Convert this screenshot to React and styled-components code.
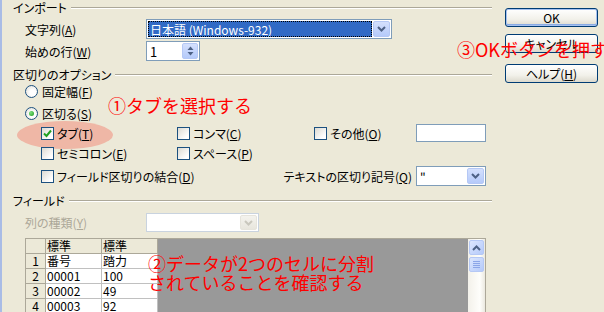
import React from 'react';
import styled, { createGlobalStyle } from 'styled-components';

const GlobalStyle = createGlobalStyle`
  html, body {
    margin: 0;
    padding: 0;
    background: #ece9d8;
  }
  body {
    font-family: "Noto Sans CJK JP", "DejaVu Sans", sans-serif;
    font-size: 12px;
    font-feature-settings: "palt";
    color: #000;
  }
`;

const Window = styled.div`
  position: relative;
  width: 604px;
  height: 312px;
  overflow: hidden;
  display: flex;
  box-sizing: border-box;
  border-left: 2px solid #a9bce6;
  background: #ece9d8;
`;

const Main = styled.div`
  width: 490px;
  box-sizing: border-box;
  padding: 0 6px 0 11px;
  display: flex;
  flex-direction: column;
`;

const Heading = styled.div`
  display: flex;
  align-items: center;
  gap: 4px;
  height: 16px;
  margin-top: ${(p) => p.$top || 0}px;
  margin-right: -6px;
  line-height: 16px;
`;

const Rule = styled.div`
  flex: 1;
  height: 0;
  border-top: 1px solid #aca899;
  border-bottom: 1px solid #fff;
`;

const Row = styled.div`
  display: flex;
  align-items: center;
  height: ${(p) => p.$h}px;
  margin-top: ${(p) => p.$top || 0}px;
  padding-left: ${(p) => p.$indent ?? 12}px;
  position: relative;
  z-index: 1;
`;

const Label = styled.span`
  width: ${(p) => (p.$w ? `${p.$w}px` : 'auto')};
  flex: none;
  white-space: nowrap;
  color: ${(p) => (p.$disabled ? '#aca899' : '#000')};
  margin-left: ${(p) => (p.$push ? 'auto' : '0')};
  margin-right: ${(p) => p.$gap || 0}px;
`;

const U = styled.span`
  text-decoration: underline;
  text-underline-offset: 1px;
`;

const SelectBox = styled.div`
  width: ${(p) => p.$w}px;
  height: ${(p) => p.$h || 20}px;
  box-sizing: border-box;
  border: 1px solid ${(p) => (p.$disabled ? '#c9d3df' : '#7f9db9')};
  background: #fff;
  display: flex;
  align-items: center;
  padding: 1px;
  gap: 1px;
`;

const SelectValue = styled.div`
  flex: 1;
  height: 100%;
  box-sizing: border-box;
  display: flex;
  align-items: center;
  padding-left: 2px;
  white-space: nowrap;
  overflow: hidden;
  ${(p) =>
    p.$selected &&
    `
    background: #316ac5;
    color: #fff;
    outline: 1px dotted #000;
    outline-offset: -1px;
  `}
`;

const DropButton = styled.div`
  width: 17px;
  height: 100%;
  box-sizing: border-box;
  border: 1px solid ${(p) => (p.$disabled ? '#e6e4dc' : '#b5c8f5')};
  border-radius: 2px;
  background: ${(p) =>
    p.$disabled
      ? 'linear-gradient(#f4f3ee, #e8e6dd)'
      : 'linear-gradient(#d4e0fd, #b5cafa)'};
  display: flex;
  align-items: center;
  justify-content: center;
  flex: none;
`;

const SpinBox = styled.div`
  width: 54px;
  height: 20px;
  box-sizing: border-box;
  border: 1px solid #7f9db9;
  background: #fff;
  display: flex;
  align-items: center;
  padding: 1px;
`;

const SpinValue = styled.div`
  flex: 1;
  padding-left: 2px;
  font-size: 13px;
`;

const SpinButton = styled.div`
  width: 16px;
  height: 100%;
  box-sizing: border-box;
  border: 1px solid #b5c8f5;
  border-radius: 2px;
  background: linear-gradient(#d4e0fd, #b5cafa);
  display: flex;
  flex-direction: column;
  align-items: center;
  justify-content: center;
  gap: 2px;
`;

const Radio = styled.span`
  width: 13px;
  height: 13px;
  box-sizing: border-box;
  border-radius: 50%;
  border: 1px solid #1c5180;
  background: radial-gradient(circle at 60% 60%, #fff 30%, #dcdad2 100%);
  display: inline-flex;
  align-items: center;
  justify-content: center;
  margin-right: 4px;
  flex: none;
  &::after {
    content: '';
    display: ${(p) => (p.$on ? 'block' : 'none')};
    width: 5px;
    height: 5px;
    border-radius: 50%;
    background: radial-gradient(circle at 35% 35%, #7ee07e, #1e9b1e);
  }
`;

const Box = styled.span`
  width: 13px;
  height: 13px;
  box-sizing: border-box;
  border: 1px solid #1c5180;
  background: linear-gradient(135deg, #dcdad2, #fff 80%);
  display: inline-flex;
  align-items: center;
  justify-content: center;
  margin-right: 3px;
  flex: none;
`;

const Check = styled.label`
  display: flex;
  align-items: center;
  white-space: nowrap;
`;

const OptionGrid = styled.div`
  display: grid;
  grid-template-columns: 136px 137px 102px 70px;
  align-items: center;
  height: ${(p) => p.$h}px;
  margin-top: ${(p) => p.$top || 0}px;
  padding-left: 28px;
  position: relative;
  z-index: 1;
`;

const TextInput = styled.div`
  width: 70px;
  height: 18px;
  box-sizing: border-box;
  border: 1px solid #7f9db9;
  background: #fff;
`;

const OptionsArea = styled.div`
  position: relative;
`;

const Highlight = styled.div`
  position: absolute;
  left: 4px;
  top: 38px;
  width: 96px;
  height: 28px;
  border-radius: 50%;
  background: #efb7a6;
  z-index: 0;
`;

const GridFrame = styled.div`
  margin-top: 6px;
  margin-left: 12px;
  flex: 1;
  display: flex;
  border-top: 1px solid #aca899;
  border-left: 1px solid #aca899;
  border-right: 1px solid #aca899;
`;

const Sheet = styled.div`
  flex: 1;
  background: #999;
  display: grid;
  grid-template-columns: 20px 56px 56px;
  grid-auto-rows: 15px;
  align-content: start;
`;

const Cell = styled.div`
  box-sizing: border-box;
  background: ${(p) => (p.$head ? '#ece9d8' : '#fff')};
  border-right: 1px solid ${(p) => (p.$head ? '#aca899' : '#c0c0c0')};
  border-bottom: 1px solid ${(p) => (p.$head ? '#aca899' : '#c0c0c0')};
  padding-left: ${(p) => (p.$center ? 0 : 1)}px;
  text-align: ${(p) => (p.$center ? 'center' : 'left')};
  line-height: 14px;
  font-size: 12px;
  white-space: nowrap;
`;

const ScrollTrack = styled.div`
  width: 17px;
  background: linear-gradient(90deg, #f3f1ea, #fefefb 70%, #ebe9e0);
  display: flex;
  flex-direction: column;
  align-items: center;
  padding-top: 1px;
  gap: 2px;
`;

const ScrollButton = styled.div`
  width: 15px;
  height: 15px;
  box-sizing: border-box;
  border: 1px solid #b5c8f5;
  border-radius: 2px;
  background: linear-gradient(135deg, #dce6fe, #b5cafa);
  display: flex;
  align-items: center;
  justify-content: center;
`;

const Side = styled.div`
  display: flex;
  flex-direction: column;
  padding: 8px 0 0 13px;
`;

const Button = styled.div`
  width: 93px;
  height: 19px;
  box-sizing: border-box;
  margin-top: ${(p) => p.$top || 0}px;
  border: 1px solid #003c74;
  border-radius: 3px;
  background: linear-gradient(#ffffff, #f2f1ea 60%, #dcd9cd);
  display: flex;
  align-items: center;
  justify-content: center;
  font-size: 12px;
  ${(p) => p.$default && 'box-shadow: inset 0 0 0 1px #a6c1f0, inset 0 -1px 0 1px #89abe4;'}
`;

const Note = styled.div`
  position: absolute;
  left: ${(p) => p.$x}px;
  top: ${(p) => p.$y}px;
  color: #ff0000;
  font-size: 18px;
  line-height: 19px;
  font-weight: 400;
  font-feature-settings: normal;
  white-space: nowrap;
  z-index: 5;
`;

function Chevron({ up, color = '#4d6185' }) {
  return (
    <svg width="9" height="6" viewBox="0 0 9 6">
      <path
        d={up ? 'M1 5 L4.5 1.5 L8 5' : 'M1 1 L4.5 4.5 L8 1'}
        fill="none"
        stroke={color}
        strokeWidth="2"
      />
    </svg>
  );
}

function SmallArrow({ up }) {
  return (
    <svg width="7" height="4" viewBox="0 0 7 4">
      <path d={up ? 'M0.5 4 L3.5 0.5 L6.5 4Z' : 'M0.5 0 L3.5 3.5 L6.5 0Z'} fill="#4d6185" />
    </svg>
  );
}

function Tick() {
  return (
    <svg width="9" height="9" viewBox="0 0 9 9">
      <path d="M1 4.5 L3.5 7 L8 1.5" fill="none" stroke="#21a121" strokeWidth="2" />
    </svg>
  );
}

function Grip() {
  return (
    <svg width="7" height="7" viewBox="0 0 7 7">
      {[0, 2, 4, 6].map((y) => (
        <line key={y} x1="0" y1={y + 0.5} x2="7" y2={y + 0.5} stroke="#8ca6e8" />
      ))}
    </svg>
  );
}

const rows = [
  ['1', '番号', '踏力'],
  ['2', '00001', '100'],
  ['3', '00002', '49'],
  ['4', '00003', '92'],
];

export default function App() {
  return (
    <>
      <GlobalStyle />
      <Window>
        <Main>
          <Heading>
            インポート
            <Rule />
          </Heading>
          <Row $h={20} $top={3}>
            <Label $w={121}>
              文字列(<U>A</U>)
            </Label>
            <SelectBox $w={246}>
              <SelectValue $selected>日本語 (Windows-932)</SelectValue>
              <DropButton>
                <Chevron />
              </DropButton>
            </SelectBox>
          </Row>
          <Row $h={20} $top={2}>
            <Label $w={121}>
              始めの行(<U>W</U>)
            </Label>
            <SpinBox>
              <SpinValue>1</SpinValue>
              <SpinButton>
                <SmallArrow up />
                <SmallArrow />
              </SpinButton>
            </SpinBox>
          </Row>

          <Heading $top={6}>
            区切りのオプション
            <Rule />
          </Heading>
          <OptionsArea>
            <Highlight />
            <Row $h={16}>
              <Radio />
              固定幅(<U>F</U>)
            </Row>
            <Row $h={16} $top={6}>
              <Radio $on />
              区切る(<U>S</U>)
            </Row>
            <OptionGrid $h={18} $top={3}>
              <Check>
                <Box>
                  <Tick />
                </Box>
                タブ(<U>T</U>)
              </Check>
              <Check>
                <Box />
                コンマ(<U>C</U>)
              </Check>
              <Check>
                <Box />
                その他(<U>O</U>)
              </Check>
              <TextInput />
            </OptionGrid>
            <OptionGrid $h={18} $top={2}>
              <Check>
                <Box />
                セミコロン(<U>E</U>)
              </Check>
              <Check>
                <Box />
                スペース(<U>P</U>)
              </Check>
            </OptionGrid>
            <Row $h={20} $top={4} $indent={28}>
              <Check>
                <Box />
                フィールド区切りの結合(<U>D</U>)
              </Check>
              <Label $push $gap={4}>
                テキストの区切り記号(<U>Q</U>)
              </Label>
              <SelectBox $w={70}>
                <SelectValue>"</SelectValue>
                <DropButton>
                  <Chevron />
                </DropButton>
              </SelectBox>
            </Row>
          </OptionsArea>

          <Heading $top={7}>
            フィールド
            <Rule />
          </Heading>
          <Row $h={19} $top={4}>
            <Label $w={121} $disabled>
              列の種類(<U>Y</U>)
            </Label>
            <SelectBox $w={113} $h={19} $disabled>
              <SelectValue />
              <DropButton $disabled>
                <Chevron color="#c9c7bd" />
              </DropButton>
            </SelectBox>
          </Row>
          <GridFrame>
            <Sheet>
              <Cell $head />
              <Cell $head>標準</Cell>
              <Cell $head>標準</Cell>
              {rows.map((r) => (
                <React.Fragment key={r[0]}>
                  <Cell $head $center>
                    {r[0]}
                  </Cell>
                  <Cell>{r[1]}</Cell>
                  <Cell>{r[2]}</Cell>
                </React.Fragment>
              ))}
            </Sheet>
            <ScrollTrack>
              <ScrollButton>
                <Chevron up />
              </ScrollButton>
              <ScrollButton>
                <Grip />
              </ScrollButton>
            </ScrollTrack>
          </GridFrame>
        </Main>

        <Side>
          <Button $default>OK</Button>
          <Button $top={7}>キャンセル</Button>
          <Button $top={11}>
            ヘルプ(<U>H</U>)
          </Button>
        </Side>

        <Note $x={455} $y={40}>③OKボタンを押す</Note>
        <Note $x={106} $y={96}>①タブを選択する</Note>
        <Note $x={146} $y={254}>
          ②データが2つのセルに分割
          <br />
          されていることを確認する
        </Note>
      </Window>
    </>
  );
}
